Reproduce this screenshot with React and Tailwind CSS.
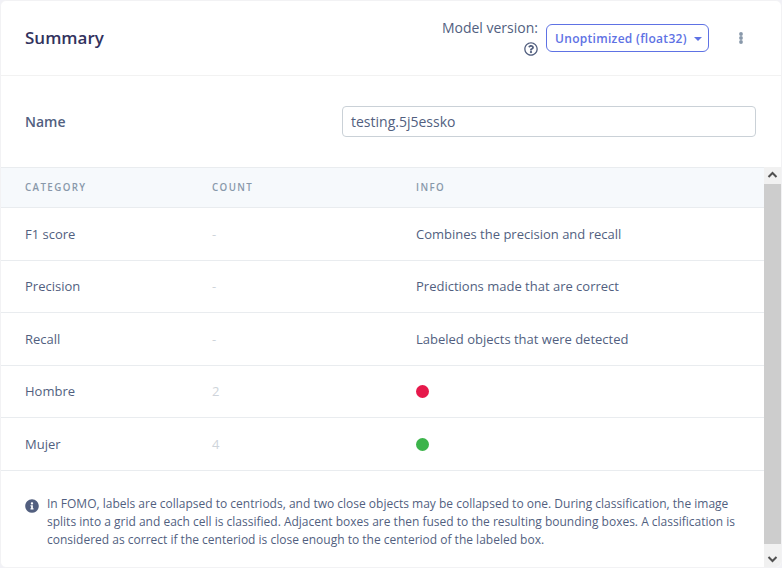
import React from "react";

const rows = [
  { name: "F1 score", count: "-", info: "Combines the precision and recall", height: "h-[53px]" },
  { name: "Precision", count: "-", info: "Predictions made that are correct", height: "h-[52px] pb-px" },
  { name: "Recall", count: "-", info: "Labeled objects that were detected", height: "h-[53px]" },
  { name: "Hombre", count: "2", dot: "bg-[#e6194b]", height: "h-[52px] pb-px" },
  { name: "Mujer", count: "4", dot: "bg-[#3cb44b]", height: "h-[53px]" },
];

const columns = "grid grid-cols-[187px_204px_1fr] items-center pl-6";

function Header() {
  return (
    <header className="flex h-[75px] shrink-0 items-center border-b border-[#f2f2f2] pl-6">
      <h3 className="flex-1 pb-0.5 text-[17px] font-semibold leading-[25px] text-[#32325d]">Summary</h3>
      <div className="flex w-[96px] flex-col items-end text-[14px] leading-[21px]">
        <span className="whitespace-nowrap">Model version:</span>
        <span className="flex h-[21px] items-center">
          <svg width="14" height="14" viewBox="0 0 512 512" fill="currentColor">
            <path d="M256 8C119 8 8 119.100 8 256c0 137 111 248 248 248s248-111 248-248C504 119.100 393 8 256 8zm0 448c-110.500 0-200-89.400-200-200 0-110.500 89.500-200 200-200 110.500 0 200 89.500 200 200 0 110.500-89.400 200-200 200zm107.200-255.200c0 67.100-72.400 68.100-72.400 92.900V300c0 6.600-5.400 12-12 12h-45.600c-6.600 0-12-5.400-12-12v-8.700c0-35.700 27.100-50 47.600-61.500 17.600-9.800 28.300-16.500 28.300-29.600 0-17.200-22-28.700-39.800-28.700-23.200 0-33.900 11-48.900 30-4.100 5.100-11.500 6.100-16.700 2.100l-27.800-21.100c-5.100-3.900-6.300-11.100-2.600-16.400C184.800 131.500 214.900 112 261.800 112c49 0 101.500 38.300 101.500 88.800zM298 368c0 23.200-18.800 42-42 42s-42-18.800-42-42 18.800-42 42-42 42 18.800 42 42z" />
          </svg>
        </span>
      </div>
      <button className="ml-2 flex h-7 w-[163px] items-center justify-between whitespace-nowrap rounded-md border border-[#5e72e4] pl-2 pr-[6px] text-[12px] font-semibold leading-[18px] tracking-[0.3px] text-[#5e72e4]">
        <span className="pt-0.5">Unoptimized (float32)</span>
        <span className="mt-0.5 border-x-4 border-t-4 border-x-transparent border-t-[#5e72e4]" />
      </button>
      <button className="ml-[30px] mr-[38px] flex w-1 flex-col items-center" aria-label="More">
        <svg width="4" height="12" viewBox="0 0 4 12" fill="#8898aa">
          <circle cx="2" cy="2" r="1.900" />
          <circle cx="2" cy="6" r="1.900" />
          <circle cx="2" cy="10" r="1.900" />
        </svg>
      </button>
    </header>
  );
}

export default function App() {
  return (
    <div className="h-[568px] w-[782px] bg-[#f1f1f6] font-['Open_Sans',sans-serif] text-[#525f7f]">
      <main className="flex h-full flex-col overflow-hidden rounded-md border border-[#f2f2f4] bg-white">
        <Header />
        <div className="flex h-[91px] shrink-0 items-center justify-between pl-6 pr-[25px]">
          <label className="text-[14px] font-semibold leading-[21px]">Name</label>
          <div className="flex h-[31px] w-[414px] items-center rounded border border-[#cad1d7] px-2 text-[14px]">
            testing.5j5essko
          </div>
        </div>
        <div className="flex min-h-0 flex-1">
          <div className="flex min-w-0 flex-1 flex-col">
            <div className={columns + " h-[41px] shrink-0 border-y border-[#e9ecef] bg-[#f6f9fc] text-[9.75px] font-semibold leading-[15px] tracking-[1.4px] text-[#8898aa]"}>
              <span>CATEGORY</span>
              <span>COUNT</span>
              <span>INFO</span>
            </div>
            {rows.map((row) => (
              <div key={row.name} className={columns + " shrink-0 border-b border-[#e9ecef] text-[13px] leading-[20px] " + row.height}>
                <span>{row.name}</span>
                <span className="text-[#ced4da]">{row.count}</span>
                {row.dot ? <span className={"size-[13px] rounded-full " + row.dot} /> : <span>{row.info}</span>}
              </div>
            ))}
            <div className="flex pl-6 pt-6">
              <svg className="mt-1 shrink-0" width="14" height="14" viewBox="0 0 512 512" fill="currentColor">
                <path d="M256 8C119 8 8 119.100 8 256c0 137 111 248 248 248s248-111 248-248C504 119.100 393 8 256 8zm0 110c23.200 0 42 18.800 42 42s-18.800 42-42 42-42-18.800-42-42 18.800-42 42-42zm56 254c0 6.600-5.400 12-12 12h-88c-6.600 0-12-5.400-12-12v-24c0-6.600 5.400-12 12-12h12v-64h-12c-6.600 0-12-5.400-12-12v-24c0-6.600 5.400-12 12-12h64c6.600 0 12 5.400 12 12v100h12c6.600 0 12 5.400 12 12v24z" />
              </svg>
              <p className="ml-2 w-[694px] text-[12px] leading-[18px]">
                In FOMO, labels are collapsed to centriods, and two close objects may be collapsed to one. During
                classification, the image splits into a grid and each cell is classified. Adjacent boxes are then fused
                to the resulting bounding boxes. A classification is considered as correct if the centeriod is close
                enough to the centeriod of the labeled box.
              </p>
            </div>
          </div>
          <div className="flex w-[17px] shrink-0 flex-col bg-[#f1f1f1]">
            <svg width="17" height="17" viewBox="0 0 17 17" fill="none" stroke="#505050" strokeWidth="2">
              <path d="M4.500 10 8.500 6l4 4" />
            </svg>
            <div className="flex-1 bg-[#cdcdcd]" />
            <svg className="shrink-0" width="17" height="23" viewBox="0 0 17 23" fill="none" stroke="#505050" strokeWidth="2">
              <path d="m4.500 13 4 4 4-4" />
            </svg>
          </div>
        </div>
      </main>
    </div>
  );
}
